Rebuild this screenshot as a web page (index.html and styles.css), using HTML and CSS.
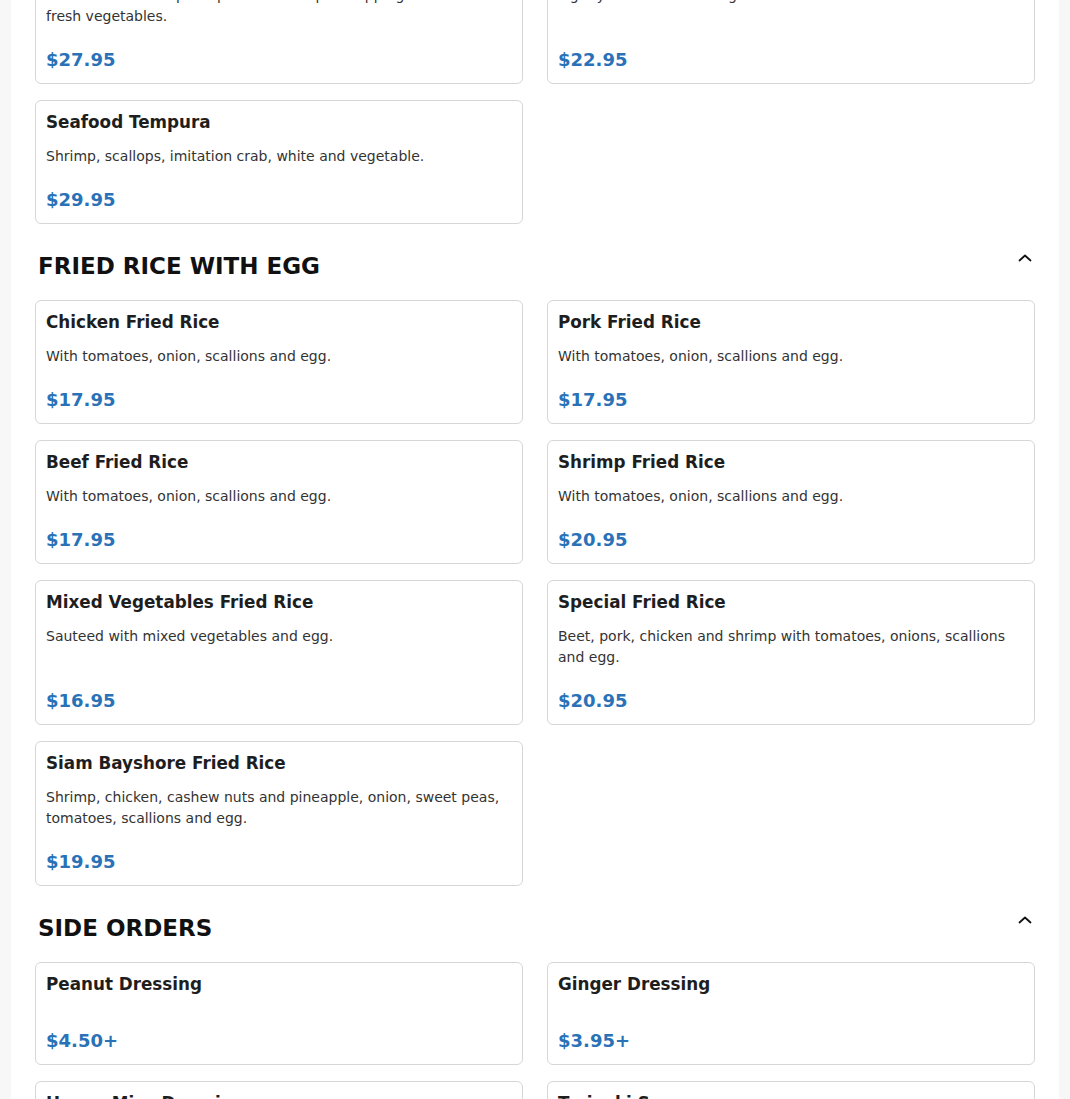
FILE: index.html
```html
<!DOCTYPE html>
<html lang="en">
<head>
<meta charset="utf-8">
<title>Menu</title>
<link rel="stylesheet" href="styles.css">
</head>
<body>
<main class="menu">
  <section class="section section-cut">
    <div class="grid">
      <article class="card">
        <h3 class="card-title">Tempura Combination</h3>
        <p class="card-desc">Chicken and shrimp tempura with tempura dipping sauce and fresh vegetables.</p>
        <div class="card-price">$27.95</div>
      </article>
      <article class="card">
        <h3 class="card-title">Vegetable Tempura</h3>
        <p class="card-desc">Lightly fried assorted vegetables.</p>
        <div class="card-price">$22.95</div>
      </article>
      <article class="card">
        <h3 class="card-title">Seafood Tempura</h3>
        <p class="card-desc">Shrimp, scallops, imitation crab, white and vegetable.</p>
        <div class="card-price">$29.95</div>
      </article>
    </div>
  </section>

  <section class="section">
    <header class="section-head">
      <h2 class="section-title">FRIED RICE WITH EGG</h2>
      <button class="toggle" type="button" aria-label="Collapse">
        <svg width="20" height="20" viewBox="0 0 20 20" fill="none" stroke="#111" stroke-width="1.8" stroke-linecap="round" stroke-linejoin="round"><path d="M4.5 12.5 L10 7.5 L15.5 12.5"/></svg>
      </button>
    </header>
    <div class="grid">
      <article class="card">
        <h3 class="card-title">Chicken Fried Rice</h3>
        <p class="card-desc">With tomatoes, onion, scallions and egg.</p>
        <div class="card-price">$17.95</div>
      </article>
      <article class="card">
        <h3 class="card-title">Pork Fried Rice</h3>
        <p class="card-desc">With tomatoes, onion, scallions and egg.</p>
        <div class="card-price">$17.95</div>
      </article>
      <article class="card">
        <h3 class="card-title">Beef Fried Rice</h3>
        <p class="card-desc">With tomatoes, onion, scallions and egg.</p>
        <div class="card-price">$17.95</div>
      </article>
      <article class="card">
        <h3 class="card-title">Shrimp Fried Rice</h3>
        <p class="card-desc">With tomatoes, onion, scallions and egg.</p>
        <div class="card-price">$20.95</div>
      </article>
      <article class="card">
        <h3 class="card-title">Mixed Vegetables Fried Rice</h3>
        <p class="card-desc">Sauteed with mixed vegetables and egg.</p>
        <div class="card-price">$16.95</div>
      </article>
      <article class="card">
        <h3 class="card-title">Special Fried Rice</h3>
        <p class="card-desc">Beet, pork, chicken and shrimp with tomatoes, onions, scallions and egg.</p>
        <div class="card-price">$20.95</div>
      </article>
      <article class="card">
        <h3 class="card-title">Siam Bayshore Fried Rice</h3>
        <p class="card-desc">Shrimp, chicken, cashew nuts and pineapple, onion, sweet peas, tomatoes, scallions and egg.</p>
        <div class="card-price">$19.95</div>
      </article>
    </div>
  </section>

  <section class="section">
    <header class="section-head">
      <h2 class="section-title">SIDE ORDERS</h2>
      <button class="toggle" type="button" aria-label="Collapse">
        <svg width="20" height="20" viewBox="0 0 20 20" fill="none" stroke="#111" stroke-width="1.8" stroke-linecap="round" stroke-linejoin="round"><path d="M4.5 12.5 L10 7.5 L15.5 12.5"/></svg>
      </button>
    </header>
    <div class="grid">
      <article class="card">
        <h3 class="card-title">Peanut Dressing</h3>
        <div class="card-price">$4.50+</div>
      </article>
      <article class="card">
        <h3 class="card-title">Ginger Dressing</h3>
        <div class="card-price">$3.95+</div>
      </article>
      <article class="card">
        <h3 class="card-title">Honey Miso Dressing</h3>
        <div class="card-price">$3.95+</div>
      </article>
      <article class="card">
        <h3 class="card-title">Teriyaki Sauce</h3>
        <div class="card-price">$3.95+</div>
      </article>
    </div>
  </section>
</main>
</body>
</html>
```
FILE: styles.css
```css
* { box-sizing: border-box; }

html, body {
  margin: 0;
  padding: 0;
  background: #f7f7f7;
  font-family: "DejaVu Sans", "Liberation Sans", sans-serif;
  color: #222;
}

.menu {
  max-width: 1048px;
  margin: 0 auto;
  background: #fff;
  padding: 0 24px 40px 24px;
  min-height: 1200px;
}

.section-cut {
  margin-top: -61px;
}

.section-head {
  display: flex;
  justify-content: space-between;
  align-items: flex-start;
  margin: 24px 0 16px;
}

.section-title {
  margin: 0;
  padding-left: 3px;
  font-size: 23px;
  line-height: 36px;
  font-weight: 700;
  letter-spacing: 0;
  color: #111;
}

.toggle {
  border: 0;
  background: transparent;
  padding: 0;
  width: 20px;
  height: 20px;
  display: flex;
  align-items: center;
  justify-content: center;
  cursor: pointer;
}

.grid {
  display: grid;
  grid-template-columns: 1fr 1fr;
  column-gap: 24px;
  row-gap: 16px;
}

.card {
  border: 1px solid #d6d6d6;
  border-radius: 6px;
  padding: 10px;
  display: flex;
  flex-direction: column;
  background: #fff;
}

.card-title {
  margin: 0 0 13px;
  font-size: 16.8px;
  line-height: 22px;
  font-weight: 700;
  color: #1e1e1e;
}

.card-desc {
  margin: 0;
  font-size: 14px;
  line-height: 21px;
  color: #333;
}

.card-price {
  margin-top: auto;
  padding-top: 19px;
  font-size: 18px;
  line-height: 27px;
  font-weight: 700;
  color: #2a72b8;
}
```
